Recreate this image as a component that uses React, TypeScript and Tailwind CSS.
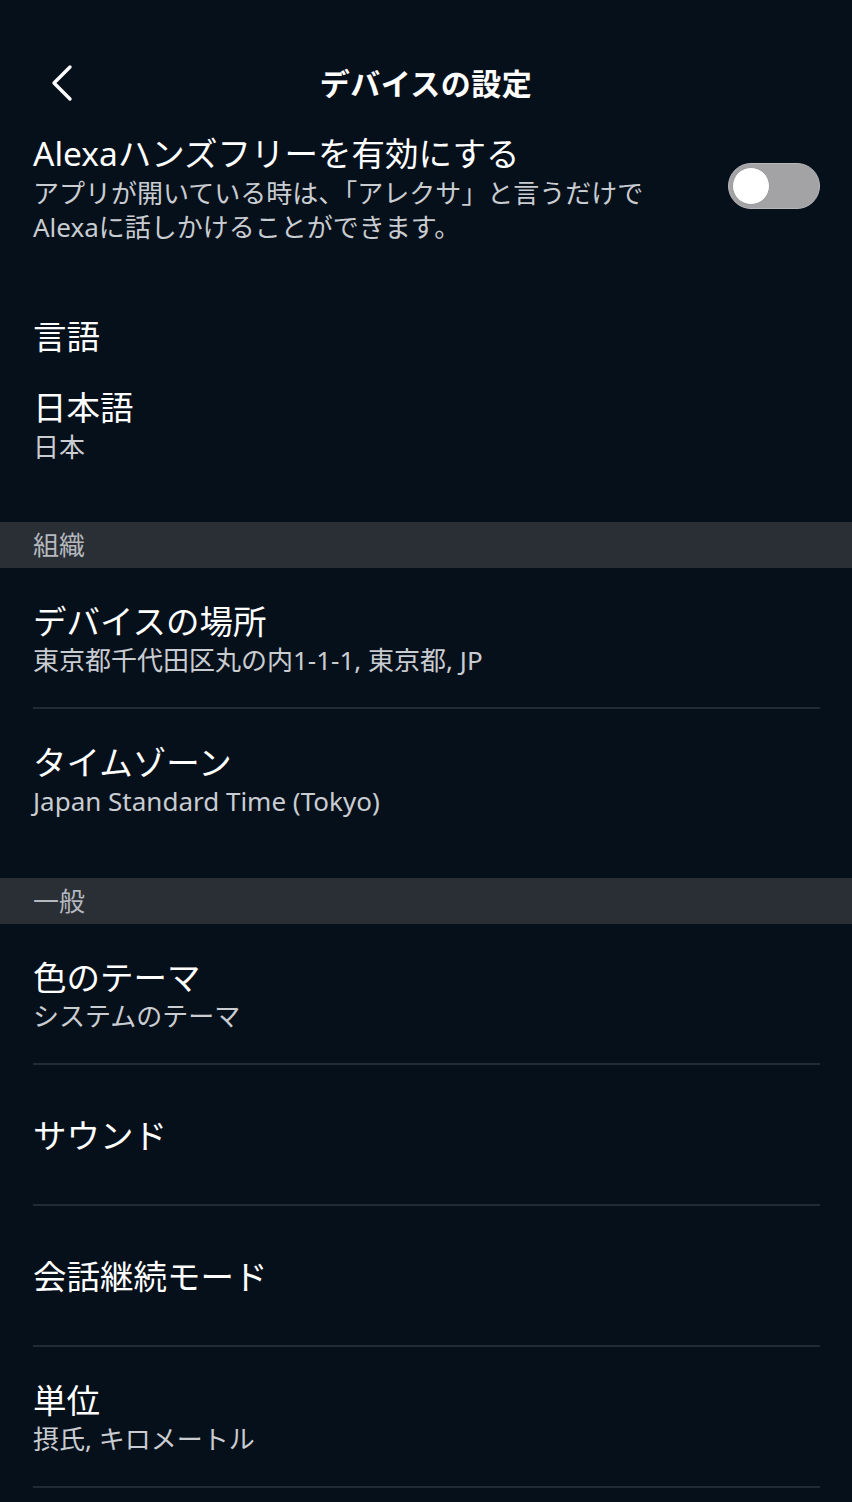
import React from "react";

const font = { fontFamily: "'Noto Sans', 'Noto Sans CJK JP', sans-serif" };

function Row({ title, sub, divider = true }: { title: string; sub?: string; divider?: boolean }) {
  return (
    <div className={`mx-[33px] mr-[32px] h-[141px] flex flex-col justify-center ${divider ? "border-b-2 border-[#222b35]" : ""}`}>
      <div className="text-[33.5px] leading-[44px] text-white">{title}</div>
      {sub && <div className="text-[26px] leading-[34px] text-[#c9ccd1]">{sub}</div>}
    </div>
  );
}

function Section({ label }: { label: string }) {
  return (
    <div className="h-[46px] bg-[#2a2e35] flex items-center px-[33px] text-[26px] text-[#b5b9bf]">{label}</div>
  );
}

export default function App() {
  return (
    <div style={font} className="w-[852px] h-[1502px] bg-[#06101b] overflow-hidden">
      {/* header */}
      <div className="h-[133px] pt-[40px]">
        <div className="relative h-[86px] flex items-center justify-center">
          <svg className="absolute left-[46px] top-[24px]" width="32" height="38" viewBox="0 0 32 38" fill="none">
            <path d="M24 3 L8 19 L24 35" stroke="white" strokeWidth="3.4" strokeLinecap="round" strokeLinejoin="round" />
          </svg>
          <div className="text-[30px] font-bold text-white tracking-[0.5px]">デバイスの設定</div>
        </div>
      </div>

      {/* Alexa hands free */}
      <div className="flex items-start px-[33px] pr-[32px]">
        <div className="flex-1">
          <div className="text-[33.5px] leading-[40px] text-white">Alexaハンズフリーを有効にする</div>
          <div className="mt-[3px] text-[26px] leading-[34px] text-[#c9ccd1]">
            アプリが開いている時は、「アレクサ」と言うだけで
            <br />
            Alexaに話しかけることができます。
          </div>
        </div>
        <div className="mt-[30px] w-[92px] h-[46px] rounded-full bg-[#a3a3a6] border border-[#b8b8bb] flex items-center px-[3px]">
          <div className="w-[38px] h-[38px] rounded-full bg-white border border-[#9a9a9a]" />
        </div>
      </div>

      {/* language */}
      <div className="px-[33px] mt-[70px]">
        <div className="text-[33.5px] leading-[44px] text-white">言語</div>
        <div className="mt-[27px] text-[33.5px] leading-[44px] text-white">日本語</div>
        <div className="mt-[1px] text-[26px] leading-[34px] text-[#c9ccd1]">日本</div>
      </div>

      <div className="mt-[58px]">
        <Section label="組織" />
        <Row title="デバイスの場所" sub="東京都千代田区丸の内1-1-1, 東京都, JP" />
        <div className="mx-[33px] pt-[31px] pb-[60px]">
          <div className="text-[33.5px] leading-[44px] text-white">タイムゾーン</div>
          <div className="text-[26px] leading-[34px] text-[#c9ccd1]">Japan Standard Time (Tokyo)</div>
        </div>
        <Section label="一般" />
        <Row title="色のテーマ" sub="システムのテーマ" />
        <Row title="サウンド" />
        <Row title="会話継続モード" />
        <Row title="単位" sub="摂氏, キロメートル" />
      </div>
    </div>
  );
}
